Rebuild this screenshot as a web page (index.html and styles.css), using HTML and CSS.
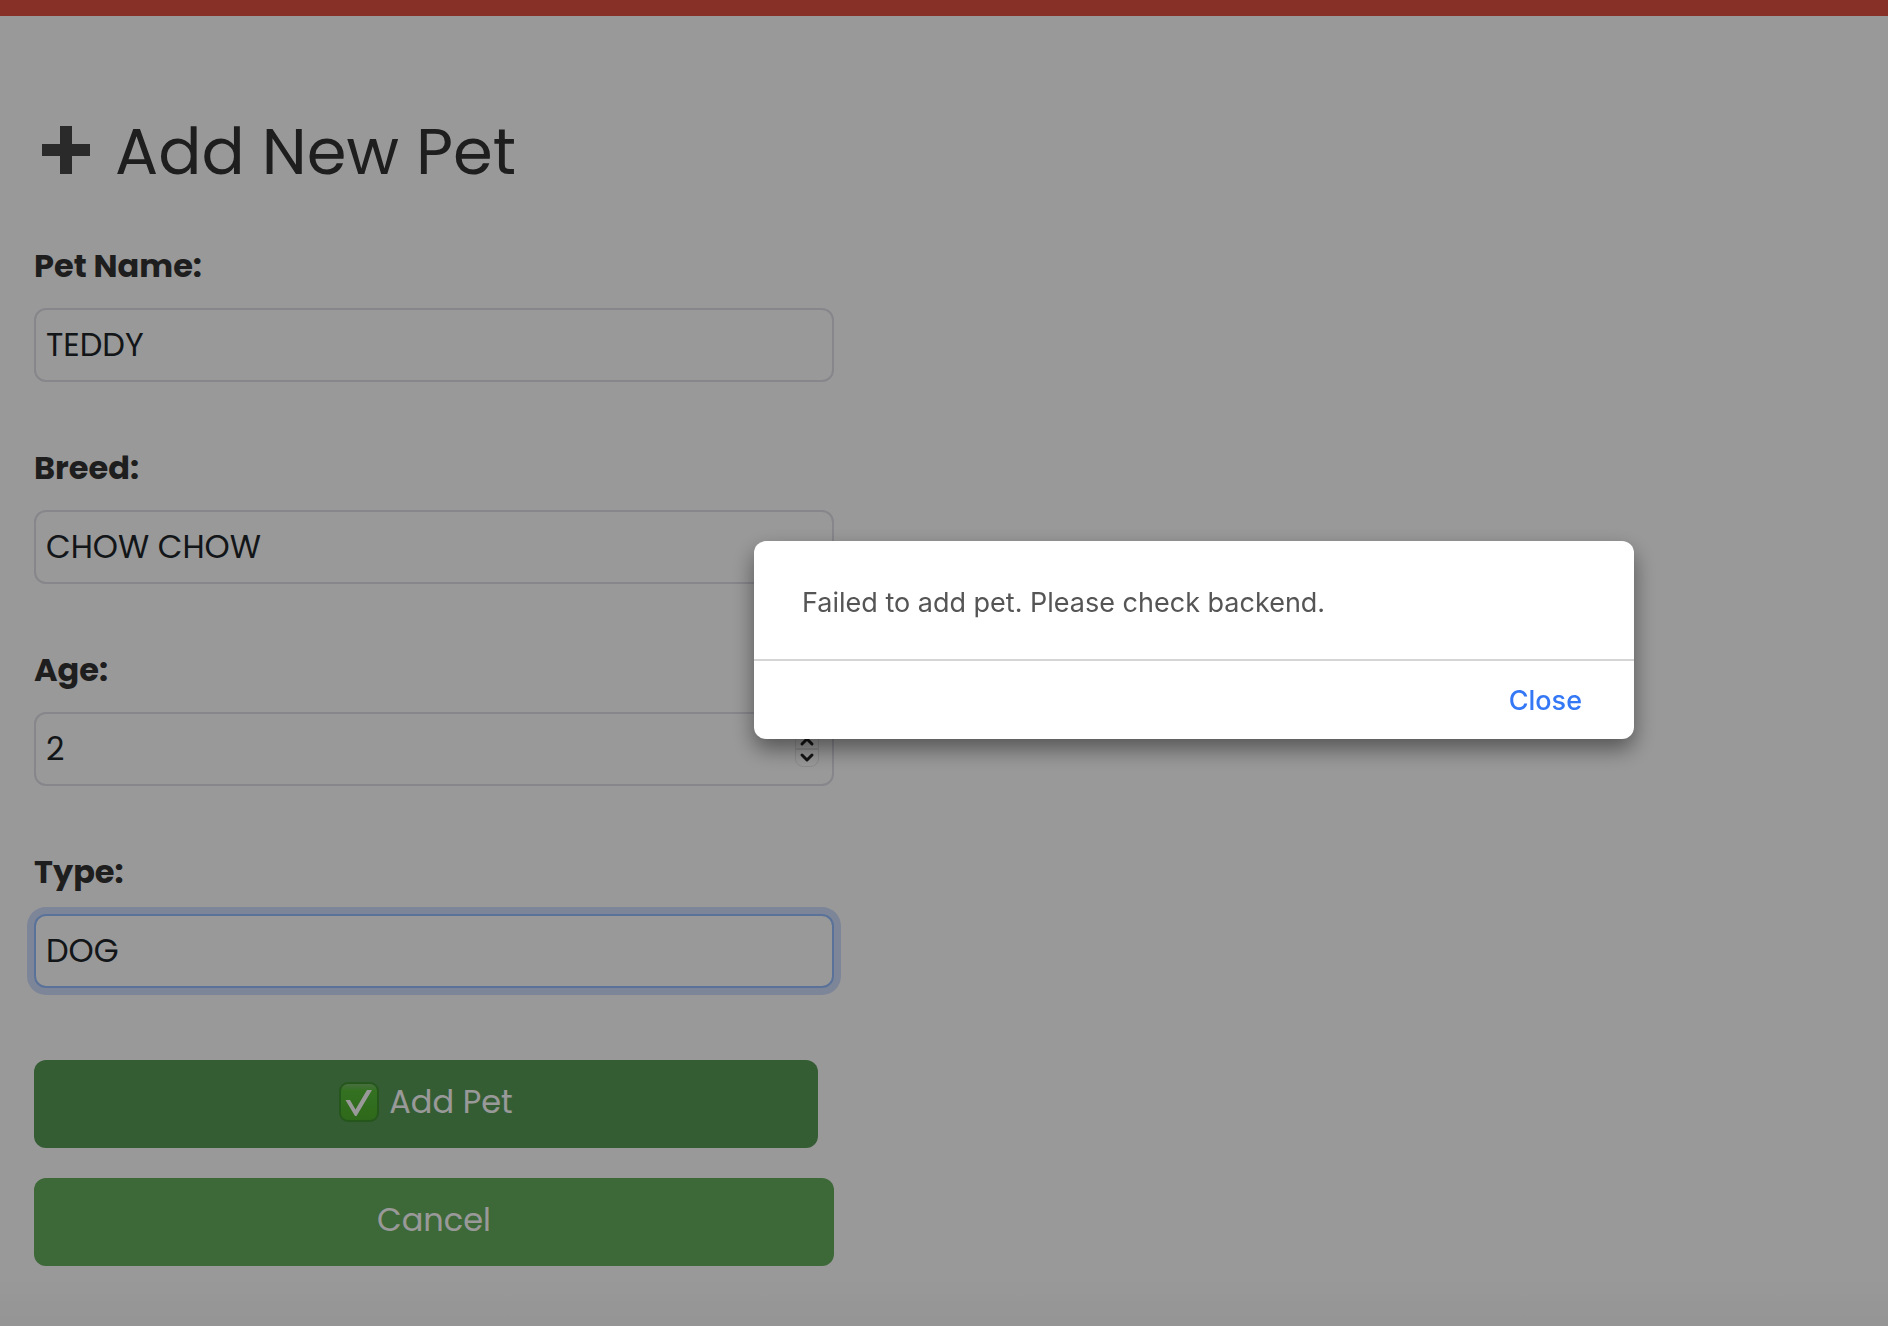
FILE: index.html
```html
<!DOCTYPE html>
<html lang="en">
<head>
<meta charset="utf-8">
<meta name="viewport" content="width=device-width, initial-scale=1">
<title>Add New Pet</title>
<link rel="stylesheet" href="styles.css">
</head>
<body>
<header class="topbar"></header>
<main class="page">
  <h1 class="title">
    <svg class="title-icon" viewBox="0 0 48 48" aria-hidden="true"><path d="M18 0h12v18h18v12H30v18H18V30H0V18h18z"/></svg>
    <span>Add New Pet</span>
  </h1>
  <form class="form">
    <div class="field">
      <label class="label" for="name">Pet Name:</label>
      <input class="input" id="name" type="text" value="TEDDY">
    </div>
    <div class="field">
      <label class="label" for="breed">Breed:</label>
      <input class="input" id="breed" type="text" value="CHOW CHOW">
    </div>
    <div class="field">
      <label class="label" for="age">Age:</label>
      <div class="number">
        <input class="input" id="age" type="number" value="2">
        <svg class="stepper" viewBox="0 0 24 36" aria-hidden="true">
          <rect class="stepper-box" x="0.5" y="0.5" width="23" height="35" rx="8"/>
          <path class="stepper-line" d="M1 18h22"/>
          <path class="stepper-arrow" d="M7 13l5-5 5 5M7 24l5 5 5-5"/>
        </svg>
      </div>
    </div>
    <div class="field">
      <label class="label" for="type">Type:</label>
      <input class="input input-focused" id="type" type="text" value="DOG">
    </div>
    <div class="actions">
      <button class="button button-add" type="submit">
        <svg class="check" viewBox="0 0 40 40" aria-hidden="true">
          <defs><linearGradient id="tile" x1="0" y1="0" x2="0" y2="1"><stop offset="0" stop-color="#7fb873"/><stop offset=".2" stop-color="#56bd38"/><stop offset="1" stop-color="#4eae2c"/></linearGradient></defs>
          <rect x="1" y="1" width="38" height="38" rx="8" fill="url(#tile)" stroke="#3f8f30" stroke-width="2"/>
          <path d="M6.500 18h4.500l5.500 9.500L28 8h5L17.500 34h-1.500z" fill="#fff"/>
        </svg>
        <span>Add Pet</span>
      </button>
      <button class="button button-cancel" type="button">Cancel</button>
    </div>
  </form>
</main>
<div class="backdrop">
  <dialog class="dialog" open aria-labelledby="message">
    <p class="dialog-text" id="message">Failed to add pet. Please check backend.</p>
    <div class="dialog-footer"><button class="dialog-close" type="button">Close</button></div>
  </dialog>
</div>
</body>
</html>
```
FILE: styles.css
```css
* {
  box-sizing: border-box;
}

body {
  margin: 0;
  min-height: 100vh;
  display: flex;
  flex-direction: column;
  background: linear-gradient(to top, #f8f8f8, #fff 48px);
  color: #333;
  font-family: Poppins, Inter, sans-serif;
  font-size: 32px;
}

.topbar {
  height: 16px;
  background: #e15043;
}

.page {
  padding: 96px 34px 56px;
}

.title {
  display: flex;
  align-items: center;
  gap: 25px;
  margin: 0 0 52px;
  padding-left: 8px;
  font-size: 64px;
  font-weight: 400;
  line-height: 80px;
}

.title-icon {
  width: 48px;
  height: 48px;
  margin-bottom: 4px;
  fill: #464646;
}

.form {
  max-width: 800px;
}

.field {
  display: flex;
  flex-direction: column;
  gap: 20px;
  margin-bottom: 64px;
}

.label {
  font-weight: 700;
  line-height: 44px;
}

.input {
  width: 100%;
  height: 74px;
  padding: 0 10px;
  border: 2px solid #dfdfe8;
  border-radius: 12px;
  background: #fff;
  color: #212529;
  font: inherit;
  outline: none;
  appearance: none;
}

.input[type="number"] {
  appearance: textfield;
}

.input-focused {
  border-color: #96bfff;
  box-shadow: 0 0 0 7px #d0defd;
}

.number {
  position: relative;
}

.stepper {
  position: absolute;
  top: 19px;
  right: 15px;
  width: 24px;
  height: 36px;
  fill: none;
}

.stepper-box,
.stepper-line {
  stroke: #e6e6e6;
}

.stepper-line {
  stroke-width: 2;
}

.stepper-arrow {
  stroke: #222;
  stroke-width: 3;
  stroke-linecap: round;
  stroke-linejoin: round;
}

.actions {
  display: flex;
  flex-direction: column;
  gap: 30px;
  padding-top: 8px;
}

.button {
  display: flex;
  align-items: center;
  justify-content: center;
  gap: 10px;
  height: 88px;
  padding: 0 0 4px;
  border: 0;
  border-radius: 12px;
  color: #fff;
  font: inherit;
}

.button-add {
  width: 98%;
  background: #589b58;
}

.button-cancel {
  background: #67ad5c;
}

.check {
  width: 40px;
  height: 40px;
}

.backdrop {
  position: fixed;
  inset: 0;
  background: rgba(0, 0, 0, 0.4);
}

.dialog {
  position: absolute;
  top: 541px;
  left: 754px;
  width: 880px;
  margin: 0;
  padding: 0;
  border: 0;
  border-radius: 12px;
  background: #fff;
  box-shadow: 0 10px 22px rgba(0, 0, 0, 0.45);
  color: #555;
  font-family: Inter, sans-serif;
  font-size: 27px;
}

.dialog-text {
  margin: 0;
  padding: 44px 48px 38px;
  border-bottom: 2px solid #d5d5d5;
  line-height: 36px;
}

.dialog-footer {
  display: flex;
  justify-content: flex-end;
  padding: 22px 48px 20px;
}

.dialog-close {
  padding: 0 4px;
  border: 0;
  background: none;
  color: #3478f6;
  font: inherit;
  font-weight: 500;
  line-height: 36px;
}
```
